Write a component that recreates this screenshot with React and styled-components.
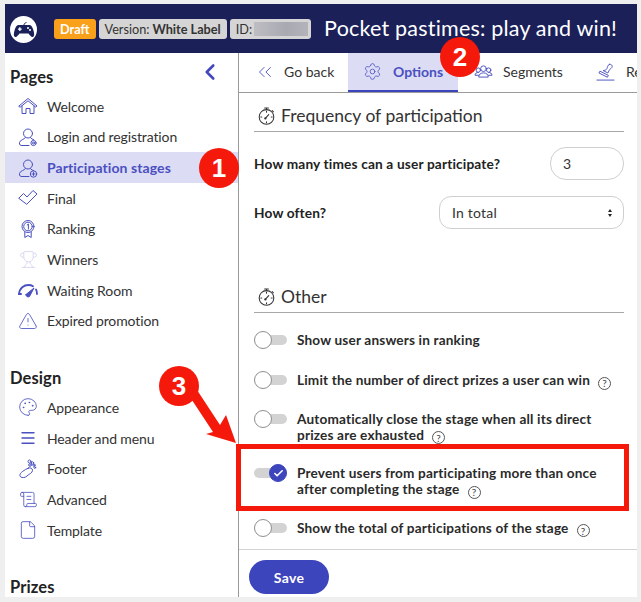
import React from "react";
import styled, { createGlobalStyle } from "styled-components";
import { ChevronLeft, ChevronsLeft, Settings, Menu, File, TriangleAlert, Palette, ScrollText, Check, Trophy } from "lucide-react";

const Global = createGlobalStyle`
  html, body { margin: 0; padding: 0; background: #efefef; }
  body { font-family: Lato, "Noto Sans", sans-serif; color: #2c2c2c; }
  * { box-sizing: border-box; }
`;
const Page = styled.div`
  position: relative; width: 641px; height: 602px; padding: 4px 5px 5px 5px; overflow: hidden;
`;
const Frame = styled.div`
  width: 632px; height: 593px; background: #fff; display: flex; flex-direction: column; overflow: hidden;
`;
const Header = styled.header`
  height: 49px; flex: none; background: #1b2059; display: flex; align-items: center; padding-left: 5px;
`;
const Logo = styled.div`
  width: 27px; height: 27px; border-radius: 50%; background: #fff; display: flex; align-items: center; justify-content: center; margin-right: 17px; margin-top: 2px;
`;
const Badge = styled.span`
  height: 20px; display: inline-flex; align-items: center; border-radius: 3px; padding: 0 ${p => p.$pr ?? 6}px 0 6px;
  margin-right: 3px; font-size: 12.7px; white-space: nowrap;
  background: ${p => p.$bg || "#d5d5d5"}; color: ${p => p.$fg || "#333"}; font-weight: ${p => p.$w || 400};
  b { font-weight: 700; margin-left: 3px; }
`;
const Masked = styled.span`
  width: 54px; height: 14px; margin-left: 2px;
  background: linear-gradient(90deg, #bdbdc2, #a9a9b2 60%, #b3b3ba);
`;
const Title = styled.h1`
  margin: -2px 0 0 10px; font-size: 21.5px; font-weight: 400; color: #fff; white-space: nowrap; letter-spacing: .2px;
`;
const Body = styled.div`
  flex: 1; display: flex; min-height: 0;
`;
const Sidebar = styled.aside`
  width: 234px; flex: none; border-right: 1px solid #9a9a9a; padding-top: 14px; overflow: hidden; position: relative;
`;
const Collapse = styled.div`
  position: absolute; top: 6px; right: 15px; color: #4348bd; display: flex;
`;
const GroupTitle = styled.h2`
  margin: 0 0 4px 5px; font-size: 16.5px; line-height: 20px; font-weight: 700; color: #222; letter-spacing: .1px;
`;
const Group = styled.div`
  margin-bottom: ${p => p.$gap}px;
`;
const Row = styled.div`
  height: 30.65px; display: flex; align-items: center; padding-left: 13px; gap: 9px; font-size: 14px;
  letter-spacing: ${p => p.$active ? ".08px" : "-.12px"};
  background: ${p => p.$active ? "#dcdcf5" : "transparent"};
  color: ${p => p.$active ? "#4a50bf" : "#333"};
  font-weight: ${p => p.$active ? 700 : 400};
`;
const IconBox = styled.span`
  width: 20px; height: 20px; display: flex; align-items: center; justify-content: center; flex: none; color: #4a50bf;
  opacity: ${p => p.$faint ? .25 : 1};
`;
const Main = styled.main`
  flex: 1; min-width: 0; display: flex; flex-direction: column;
`;
const Tabs = styled.nav`
  height: 40px; flex: none; display: flex; border-bottom: 1px solid #9a9a9a; overflow: hidden;
`;
const Tab = styled.div`
  height: 40px; flex: none; display: flex; align-items: center; gap: ${p => p.$gap || 11}px; font-size: 14px;
  padding-left: ${p => p.$pl}px; width: ${p => p.$w}px; white-space: nowrap;
  background: ${p => p.$active ? "#dcdcf5" : "transparent"};
  color: ${p => p.$active ? "#4a50bf" : "#333"}; font-weight: ${p => p.$active ? 700 : 400};
  border-bottom: 3px solid ${p => p.$active ? "#3d45bd" : "transparent"};
  svg { color: #4a50bf; flex: none; }
`;
const Content = styled.div`
  flex: 1; min-height: 0; padding: 0 13px 0 15px; overflow: hidden;
`;
const Section = styled.section`
  margin-bottom: ${p => p.$mb || 0}px;
`;
const SectionTitle = styled.h3`
  margin: 0 0 ${p => p.$mb}px; height: 39px; padding: 6px 0 0 3px; display: flex; align-items: center; gap: 5px;
  font-size: 17.5px; font-weight: 400; color: #333; border-bottom: 1px solid #a8a8a8;
`;
const FieldRow = styled.div`
  display: flex; align-items: center; justify-content: space-between; height: 33px; margin-bottom: ${p => p.$mb || 0}px;
`;
const FieldLabel = styled.label`
  font-size: 13.7px; font-weight: 700; color: #222; letter-spacing: .15px;
`;
const Field = styled.div`
  width: ${p => p.$w}px; height: 33px; border: 1px solid #cfcfcf; border-radius: ${p => p.$r}px; padding: 0 11px 0 12px;
  display: flex; align-items: center; justify-content: space-between; font-size: 14px; color: #333; letter-spacing: .2px;
`;
const Arrows = styled.span`
  display: flex; flex-direction: column; gap: 2px;
  &::before, &::after { content: ""; width: 0; height: 0; border-left: 2.5px solid transparent; border-right: 2.5px solid transparent; }
  &::before { border-bottom: 3px solid #222; }
  &::after { border-top: 3px solid #222; }
`;
const ToggleRow = styled.div`
  display: flex; align-items: flex-start; gap: 10px; margin-bottom: ${p => p.$mb || 0}px;
  font-size: 13.6px; line-height: 16px; font-weight: 700; color: #2a2a2a; letter-spacing: .17px;
`;
const ToggleText = styled.div`
  padding-top: 1px; width: 320px;
`;
const Track = styled.span`
  position: relative; width: 33px; height: 18px; flex: none; display: flex; align-items: center;
  &::before { content: ""; width: 100%; height: 10px; border-radius: 5px; background: #d3d3d3; }
`;
const Knob = styled.span`
  position: absolute; top: 0; left: ${p => p.$on ? 15 : 0}px; width: 18px; height: 18px; border-radius: 50%;
  background: ${p => p.$on ? "#3d45bd" : "#fff"}; border: 1px solid ${p => p.$on ? "#3d45bd" : "#8f8f8f"};
  display: flex; align-items: center; justify-content: center; color: #fff;
`;
const Help = styled.span`
  display: inline-flex; width: 13px; height: 13px; border: 1px solid #555; border-radius: 50%; margin-left: 8px;
  align-items: center; justify-content: center; font-size: 10px; line-height: 1; font-weight: 400; color: #444; vertical-align: -2px; letter-spacing: 0;
`;
const Footer = styled.footer`
  flex: none; height: 48px; border-top: 1px solid #d4d4d4; padding: 10px 0 0 10px;
`;
const SaveButton = styled.button`
  width: 80px; height: 34px; border: 0; border-radius: 17px; background: #3d45bd; color: #fff; font: 700 14px Lato, sans-serif; letter-spacing: .3px;
`;
const Highlight = styled.div`
  position: absolute; left: 236px; top: 444px; width: 393px; height: 67px; border: 5px solid #f5190c;
`;
const Callout = styled.span`
  position: absolute; left: ${p => p.$x - 20}px; top: ${p => p.$y - 20}px; width: 40px; height: 40px; border-radius: 50%;
  background: #f5190c; color: #fff; font: 700 26px "Liberation Sans", sans-serif; display: flex; align-items: center; justify-content: center;
`;
const ArrowSvg = styled.svg`
  position: absolute; left: 170px; top: 380px;
`;

const S = { fill: "none", stroke: "currentColor", strokeWidth: 1, strokeLinecap: "round", strokeLinejoin: "round" };
const Ic = ({ children, w = 20, h = 20 }) => <svg width={w} height={h} viewBox="0 0 20 20" {...S}>{children}</svg>;

const House = () => <Ic><path d="M1 10 10 2.5 19 10l-1.4 1L10 4.8 2.4 11zM4 10v7.5h4v-5h4v5h4V10" /></Ic>;
const UserDot = ({ plus }) => <Ic><circle cx="10" cy="6.5" r="4.5" /><path d="M7.5 10.5C7 12.5 2 12.5 1.5 15.5c-.4 2.5 1 3 2.5 3h7" /><path d="M12.5 10.8c.6 1 2.2 1.4 3.3 2" /><circle cx="15.5" cy="16" r={plus ? 3.2 : 2.6} />{!plus && <circle cx="15.5" cy="16" r="1" />}{plus && <path d="M15.5 14.5v3M14 16h3" />}</Ic>;
const CheckOut = () => <Ic><path d="M1 10 5.500 5.500l3.500 3.500L15 2.500 19 6 9 16z" /></Ic>;
const Medal = () => <Ic><circle cx="10" cy="7.500" r="6" /><circle cx="10" cy="7.500" r="4.300" /><path d="M9.200 6 10.400 5v5M6.800 13v5.500l3.200-2 3.200 2V13" /></Ic>;
const Speed = () => <Ic><path d="M1 14C1.500 8 6 5 10.500 5c2 0 3.300.5 4.500 1.300M18 9.500c.6 1 1 2.600 1 4.500" strokeWidth="1.800" /><path d="M8 14.500 16 8l-4.500 8.500a2.200 2.200 0 0 1-3.500-2z" fill="currentColor" /><path d="M1 14h2" strokeWidth="2" /></Ic>;
const Foot = () => <Ic><path d="M10.500 9c2-.6 4 .3 4 2.300 0 3-3.500 3.500-5.500 5.700-1.600 1.700-5 2.200-6.500.7-1.500-1.700 0-3.800 2-5.200C6.500 11.300 8.500 9.600 10.500 9z" /><circle cx="11.500" cy="2.500" r="1.500" /><circle cx="14.500" cy="4" r="1.200" /><circle cx="16" cy="6.200" r="1.100" /><circle cx="16.800" cy="8.500" r=".9" /><circle cx="12" cy="6" r="1.300" /></Ic>;
const Stopwatch = ({ s = 19 }) => <svg width={s} height={s} viewBox="0 0 20 20" {...S} strokeWidth="1.100"><circle cx="10" cy="11.500" r="7.700" /><path d="M8 2h4M10 2v2" /><path d="M16 4.800l1.300 1.300" /><path d="M8.800 13 12.300 9" /><circle cx="8.800" cy="13" r=".7" /><path d="M10 5.500v1M4 11.500h1M15 11.500h1M10 16.500v1" /></svg>;
const People = () => <svg width="19" height="17" viewBox="0 0 20 18" {...S}><circle cx="10" cy="6" r="3" /><circle cx="4.500" cy="7.500" r="2.300" /><circle cx="15.500" cy="7.500" r="2.300" /><path d="M5 14.500c0-2.500 2-4 5-4s5 1.500 5 4zM4.800 13H1c0-2 1.500-3 3.500-3M15.200 13H19c0-2-1.500-3-3.500-3" /></svg>;
const StampIc = () => <svg width="19" height="20" viewBox="0 0 20 20" {...S}><path d="M14 2c2-.8 4 1.600 2.600 3.400-1 1.300-2.400 1.600-2.800 3L12.500 11 7.500 8.500c1.800-.3 3.300-.6 4-2 .6-1.400 .6-3.700 2.500-4.500zM4.500 9.300 13 13.500l-1 2-8.500-4.300z" /><path d="M1 18.500h18" /></svg>;
const Pad = () => <svg width="22" height="16" viewBox="0 0 22 16" fill="#1b2059"><path d="M6 3h10c2.500 0 3.500 2 4.500 5.500 1 3.500 1 6-.7 6.500-1.500.4-3-2-4.300-3.500H6.500C5.200 13 3.700 15.400 2.200 15 .5 14.500.5 12 1.500 8.500 2.500 5 3.500 3 6 3z" /><path d="M11 3C11 1.500 12 1 13.500 .5" stroke="#1b2059" fill="none" /><path d="M5 6.500h1.200V5.300h1.300v1.200h1.200v1.300H7.500V9H6.200V7.800H5z" fill="#fff" /><circle cx="15" cy="6" r="1" fill="#fff" /><circle cx="17" cy="8" r="1" fill="#fff" /></svg>;

const pages = [
  ["Welcome", <House />], ["Login and registration", <UserDot />], ["Participation stages", <UserDot plus />, true],
  ["Final", <CheckOut />], ["Ranking", <Medal />], ["Winners", <Trophy size={19} strokeWidth={1} />, false, true],
  ["Waiting Room", <Speed />], ["Expired promotion", <TriangleAlert size={20} strokeWidth={1} />],
];
const design = [
  ["Appearance", <Palette size={20} strokeWidth={1} />], ["Header and menu", <Menu size={18} strokeWidth={1.8} />],
  ["Footer", <Foot />], ["Advanced", <ScrollText size={19} strokeWidth={1} />], ["Template", <File size={20} strokeWidth={1} />],
];

const NavRow = ({ item: [label, icon, active, faint] }) => (
  <Row $active={active}><IconBox $faint={faint}>{icon}</IconBox>{label}</Row>
);
const Toggle = ({ on, mb, children }) => (
  <ToggleRow $mb={mb}>
    <Track><Knob $on={on}>{on && <Check size={11} strokeWidth={3.5} />}</Knob></Track>
    <ToggleText>{children}</ToggleText>
  </ToggleRow>
);
const Q = () => <Help>?</Help>;

export default function App() {
  return (
    <Page>
      <Global />
      <Frame>
        <Header>
          <Logo><Pad /></Logo>
          <Badge $bg="#f9a11b" $fg="#fff" $w={700}>Draft</Badge>
          <Badge>Version:<b>White Label</b></Badge>
          <Badge $pr={3}>ID:<Masked /></Badge>
          <Title>Pocket pastimes: play and win!</Title>
        </Header>
        <Body>
          <Sidebar>
            <Collapse><ChevronLeft size={26} strokeWidth={2.4} /></Collapse>
            <Group $gap={32}>
              <GroupTitle>Pages</GroupTitle>
              {pages.map(p => <NavRow key={p[0]} item={p} />)}
            </Group>
            <Group $gap={32}>
              <GroupTitle>Design</GroupTitle>
              {design.map(p => <NavRow key={p[0]} item={p} />)}
            </Group>
            <GroupTitle>Prizes</GroupTitle>
          </Sidebar>
          <Main>
            <Tabs>
              <Tab $pl={15} $w={109} $gap={8}><ChevronsLeft size={22} strokeWidth={1} />Go back</Tab>
              <Tab $active $pl={15} $w={110}><Settings size={19} strokeWidth={1} />Options</Tab>
              <Tab $pl={16} $w={121} $gap={10}><People />Segments</Tab>
              <Tab $pl={17} $w={90} $gap={11}><StampIc />Restrictions</Tab>
            </Tabs>
            <Content>
              <Section $mb={45}>
                <SectionTitle $mb={15}><Stopwatch />Frequency of participation</SectionTitle>
                <FieldRow $mb={16}>
                  <FieldLabel>How many times can a user participate?</FieldLabel>
                  <Field $w={74} $r={16}>3</Field>
                </FieldRow>
                <FieldRow>
                  <FieldLabel>How often?</FieldLabel>
                  <Field $w={185} $r={12}>In total<Arrows /></Field>
                </FieldRow>
              </Section>
              <Section>
                <SectionTitle $mb={18}><Stopwatch />Other</SectionTitle>
                <Toggle mb={22}>Show user answers in ranking</Toggle>
                <Toggle mb={20}>Limit the number of direct prizes a user can win<Q /></Toggle>
                <Toggle mb={20}>Automatically close the stage when all its direct prizes are exhausted<Q /></Toggle>
                <Toggle on mb={20}>Prevent users from participating more than once after completing the stage<Q /></Toggle>
                <Toggle>Show the total of participations of the stage<Q /></Toggle>
              </Section>
            </Content>
            <Footer><SaveButton>Save</SaveButton></Footer>
          </Main>
        </Body>
      </Frame>
      <ArrowSvg width="70" height="70" viewBox="0 0 70 70">
        <path d="M27 10 20 17 43 52 36 54 66 63 56 35 50 45z" fill="#f5190c" />
      </ArrowSvg>
      <Highlight />
      <Callout $x={219} $y={168}>1</Callout>
      <Callout $x={460} $y={57}>2</Callout>
      <Callout $x={179} $y={386}>3</Callout>
    </Page>
  );
}
